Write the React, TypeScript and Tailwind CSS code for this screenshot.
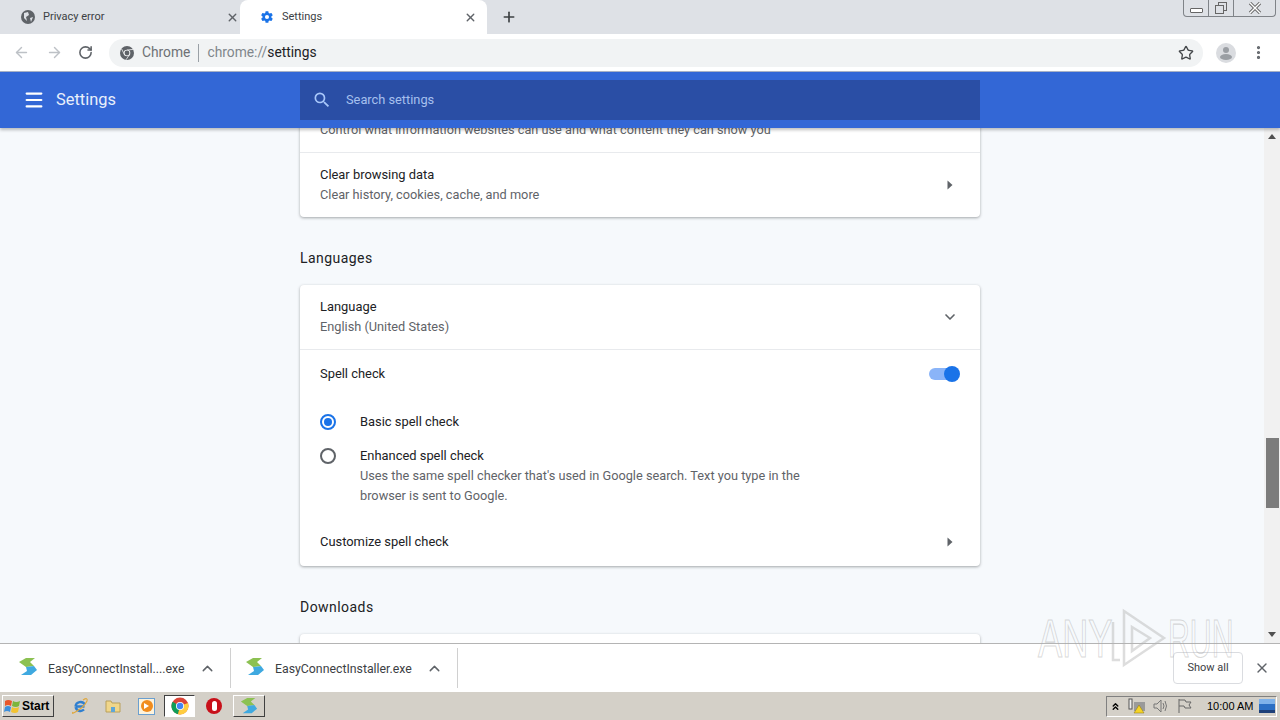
import { ArrowLeft, ArrowRight, ChevronDown, ChevronUp, ChevronsUp, Menu, MoreVertical, Plus, RotateCw, Star, X } from 'lucide-react';

function SetupIcon({ size = 20 }: { size?: number }) {
  return (
    <svg width={size} height={size} viewBox="0 0 20 20">
      <path d="M1 5 L8 1 L17 1 L12 5 L16 9 L8 10 Z" fill="#8cc152" />
      <path d="M8 10 L16 9 L19 13 L13 18 L3 18 L9 14 Z" fill="#3fa9e0" />
    </svg>
  );
}

function CaretRight() {
  return (
    <svg width="6" height="10" viewBox="0 0 6 10">
      <path d="M0.5 0.5 L5.5 5 L0.5 9.5 Z" fill="#5f6368" />
    </svg>
  );
}

function ChromeLogo() {
  return (
    <svg width="18" height="18" viewBox="0 0 18 18">
      <circle cx="9" cy="9" r="8.5" fill="#db4437" />
      <path d="M9 9 L1.6 4.7 A8.5 8.5 0 0 0 7 17.3 Z" fill="#0f9d58" />
      <path d="M9 9 L16.9 6 A8.5 8.5 0 0 1 7 17.3 Z" fill="#ffcd40" />
      <circle cx="9" cy="9" r="4" fill="#fff" />
      <circle cx="9" cy="9" r="3.2" fill="#4285f4" />
    </svg>
  );
}

function TopTabs() {
  return (
    <div className="flex h-[34px] items-stretch bg-[#dee1e6] text-[11px] text-[#3c4043]">
      <div className="flex w-[240px] items-center pl-[21px] pr-[1px]">
        <svg width="14" height="14" viewBox="0 0 14 14" className="mr-2">
          <circle cx="7" cy="7" r="7" fill="#5f6368" />
          <path d="M3 3 L7 2 L8 5 L5 7 L6 11 L3 8 Z M9 8 L12 7 L10 12 Z" fill="#dee1e6" />
        </svg>
        <span>Privacy error</span>
        <X size={13} strokeWidth={2.5} className="ml-auto text-[#5f6368]" />
      </div>
      <div className="flex w-[247px] items-center rounded-t-lg bg-white pl-[20px] pr-[10px]">
        <svg width="14" height="14" viewBox="0 0 24 24" className="mr-2">
          <path
            d="M19.4 13c.04-.33.06-.66.06-1s-.02-.67-.06-1l2.1-1.65a.5.5 0 0 0 .12-.64l-2-3.46a.5.5 0 0 0-.61-.22l-2.49 1a7.3 7.3 0 0 0-1.73-1l-.38-2.65A.5.5 0 0 0 13.92 2h-4a.5.5 0 0 0-.49.42l-.38 2.65a7.7 7.7 0 0 0-1.73 1l-2.49-1a.5.5 0 0 0-.61.22l-2 3.46a.5.5 0 0 0 .12.64L4.44 11a7.9 7.9 0 0 0 0 2l-2.1 1.65a.5.5 0 0 0-.12.64l2 3.46c.12.22.39.3.61.22l2.49-1c.52.4 1.08.73 1.73 1l.38 2.65c.04.24.25.42.49.42h4c.24 0 .45-.18.49-.42l.38-2.65a7.7 7.7 0 0 0 1.73-1l2.49 1c.22.08.49 0 .61-.22l2-3.46a.5.5 0 0 0-.12-.64L19.4 13zM12 15.5a3.5 3.5 0 1 1 0-7 3.5 3.5 0 0 1 0 7z"
            fill="#1a73e8"
          />
        </svg>
        <span>Settings</span>
        <X size={13} strokeWidth={2.5} className="ml-auto text-[#5f6368]" />
      </div>
      <div className="ml-[14px] flex items-center">
        <Plus size={16} strokeWidth={2.5} className="text-[#3c4043]" />
      </div>
      <div className="ml-auto mr-[4px] flex h-[17px] w-[93px] rounded-b-[4px] border border-t-0 border-[#7f8388]">
        <div className="flex w-[25px] items-end justify-center border-r border-[#7f8388] pb-[3px]">
          <div className="h-[5px] w-[13px] rounded-[1px] border border-[#666] bg-white" />
        </div>
        <div className="flex w-[25px] items-center justify-center border-r border-[#7f8388]">
          <div className="relative h-[12px] w-[12px]">
            <div className="absolute right-0 top-0 h-[9px] w-[9px] border border-[#666]" />
            <div className="absolute bottom-0 left-0 h-[9px] w-[9px] border border-[#666] bg-[#dee1e6]" />
          </div>
        </div>
        <div className="flex flex-1 items-center justify-center">
          <svg width="14" height="12" viewBox="0 0 14 12">
            <path d="M2 1 L12 11 M12 1 L2 11" stroke="#666" strokeWidth="3.2" />
            <path d="M2 1 L12 11 M12 1 L2 11" stroke="#fff" strokeWidth="1.4" />
          </svg>
        </div>
      </div>
    </div>
  );
}

function Toolbar() {
  return (
    <div className="flex h-[38px] items-center border-b border-[#aab4c8] bg-white pl-[13px] pr-[13px]">
      <ArrowLeft size={17} strokeWidth={2} className="text-[#bdc1c6]" />
      <ArrowRight size={17} strokeWidth={2} className="ml-[16px] text-[#bdc1c6]" />
      <RotateCw size={15} strokeWidth={2.5} className="ml-[15px] text-[#5f6368]" />
      <div className="ml-[16px] flex h-[28px] w-[1094px] items-center rounded-full bg-[#f1f3f4] pl-[11px] pr-[9px] text-[13.8px]">
        <svg width="14" height="14" viewBox="0 0 14 14" className="mr-[8px] shrink-0">
          <circle cx="7" cy="7" r="7" fill="#5f6368" />
          <path d="M7 4 L13 3.4 M4.4 8.5 L1.6 3 M9.6 8.5 L6 13.8" stroke="#f1f3f4" strokeWidth="0.8" />
          <circle cx="7" cy="7" r="3.3" fill="#f1f3f4" />
          <circle cx="7" cy="7" r="2.4" fill="#5f6368" />
        </svg>
        <span className="text-[#6e7175]">Chrome</span>
        <span className="ml-[8px] mr-[8px] h-[18px] w-px bg-[#9aa0a6]" />
        <span className="text-[#80868b]">chrome://</span>
        <span className="text-[#202124]">settings</span>
        <Star size={16} strokeWidth={2} className="ml-auto text-[#44474a]" />
      </div>
      <div className="ml-[13px] flex h-[20px] w-[20px] items-center justify-center overflow-hidden rounded-full bg-[#dadce0]">
        <svg width="20" height="20" viewBox="0 0 20 20">
          <circle cx="10" cy="7" r="3" fill="#9a9ea3" />
          <ellipse cx="10" cy="14" rx="6" ry="3" fill="#9a9ea3" />
        </svg>
      </div>
      <MoreVertical size={17} strokeWidth={2.5} className="ml-[14px] text-[#5f6368]" />
    </div>
  );
}

function SettingsHeader() {
  return (
    <div className="relative z-10 flex h-[56px] items-center bg-[#3367d6] shadow-[0_2px_3px_rgba(0,0,0,0.25)]">
      <div className="flex w-[300px] items-center pl-[23px]">
        <Menu size={22} strokeWidth={2.4} className="text-white" />
        <span className="ml-[11px] mt-[1px] text-[16.4px] text-[#e8effb]">Settings</span>
      </div>
      <div className="flex h-[40px] w-[680px] items-center bg-[#2a4ea5] pl-[12px]">
        <svg width="20" height="20" viewBox="0 0 24 24">
          <path
            d="M15.5 14h-.79l-.28-.27A6.47 6.47 0 0 0 16 9.5 6.5 6.5 0 1 0 9.5 16c1.61 0 3.09-.59 4.23-1.57l.27.28v.79l5 4.99L20.49 19l-4.99-5zm-6 0C7.01 14 5 11.99 5 9.5S7.01 5 9.5 5 14 7.01 14 9.5 11.99 14 9.5 14z"
            fill="#a8c7fa"
          />
        </svg>
        <span className="ml-[14px] text-[12.8px] text-[#a6c0ee]">Search settings</span>
      </div>
    </div>
  );
}

function SettingsBody() {
  return (
    <div className="flex min-h-0 flex-1 overflow-hidden bg-[#f6f9fc] text-[12.9px] text-[#202124]">
      <div className="min-w-0 flex-1 pl-[300px]">
        <div className="w-[680px]">
          <div className="-mt-[33px] rounded-b-[4px] bg-white shadow-[0_1px_3px_rgba(60,64,67,0.45)]">
            <div className="flex h-[57px] items-end pb-[13px] pl-[20px] text-[12.72px] text-[#5f6368]">
              Control what information websites can use and what content they can show you
            </div>
            <div className="flex h-[65px] items-center justify-between border-t border-[#e8eaed] pl-[20px] pr-[27px]">
              <div className="leading-[20px]">
                <div>Clear browsing data</div>
                <div className="text-[12.75px] text-[#5f6368]">Clear history, cookies, cache, and more</div>
              </div>
              <CaretRight />
            </div>
          </div>

          <h2 className="mt-[31px] text-[14px] font-normal leading-[20px] tracking-[0.45px]">Languages</h2>

          <div className="mt-[17px] rounded-[4px] bg-white shadow-[0_1px_3px_rgba(60,64,67,0.45)]">
            <div className="flex h-[64px] items-center justify-between pl-[20px] pr-[22px]">
              <div className="leading-[20px]">
                <div>Language</div>
                <div className="text-[12.75px] text-[#5f6368]">English (United States)</div>
              </div>
              <ChevronDown size={16} strokeWidth={2.5} className="text-[#5f6368]" />
            </div>
            <div className="flex h-[48px] items-center justify-between border-t border-[#e8eaed] pl-[20px] pr-[21px]">
              <span>Spell check</span>
              <div className="relative h-[12px] w-[30px] rounded-full bg-[#8ab4f8]">
                <div className="absolute -right-[1px] -top-[2px] h-[16px] w-[16px] rounded-full bg-[#1a73e8]" />
              </div>
            </div>
            <div className="mt-[15px] flex h-[20px] items-center pl-[20px]">
              <div className="flex h-[16px] w-[16px] items-center justify-center rounded-full border-2 border-[#1a73e8]">
                <div className="h-[8px] w-[8px] rounded-full bg-[#1a73e8]" />
              </div>
              <span className="ml-[24px]">Basic spell check</span>
            </div>
            <div className="mt-[14px] flex pl-[20px]">
              <div className="mt-[2px] h-[16px] w-[16px] rounded-full border-2 border-[#5f6368]" />
              <div className="ml-[24px] w-[460px] leading-[20px]">
                <div>Enhanced spell check</div>
                <div className="text-[12.75px] text-[#5f6368]">
                  Uses the same spell checker that's used in Google search. Text you type in the browser is sent to Google.
                </div>
              </div>
            </div>
            <div className="mt-[12px] flex h-[48px] items-center justify-between pl-[20px] pr-[27px]">
              <span>Customize spell check</span>
              <CaretRight />
            </div>
          </div>

          <h2 className="mt-[31px] text-[14px] font-normal leading-[20px] tracking-[0.45px]">Downloads</h2>

          <div className="mt-[17px] h-[40px] rounded-[4px] bg-white shadow-[0_1px_3px_rgba(60,64,67,0.45)]" />
        </div>
      </div>
      <div className="flex w-[16px] flex-col items-center bg-[#f1f1f1]">
        <div className="mt-[6px] h-0 w-0 border-x-[4px] border-b-[5px] border-x-transparent border-b-[#505050]" />
        <div className="mt-[299px] h-[70px] w-[13px] bg-[#7c7c7c]" />
        <div className="mt-auto mb-[6px] h-0 w-0 border-x-[4px] border-t-[5px] border-x-transparent border-t-[#505050]" />
      </div>
    </div>
  );
}

function DownloadItem({ name, width, pad }: { name: string; width: string; pad: string }) {
  return (
    <div className={`flex h-[40px] items-center border-r border-[#d0d0d0] ${pad} ${width}`}>
      <div className="-mt-[3px]">
        <SetupIcon />
      </div>
      <span className="ml-[10px] mt-[2px] text-[12.3px] text-[#3c4043]">{name}</span>
      <ChevronUp size={17} strokeWidth={2} className="ml-auto mr-[14px] text-[#5f6368]" />
    </div>
  );
}

function DownloadBar() {
  return (
    <div className="relative flex h-[49px] items-center border-t border-[#b4b4b4] bg-white">
      <DownloadItem name="EasyConnectInstall....exe" width="w-[231px]" pad="pl-[18px]" />
      <DownloadItem name="EasyConnectInstaller.exe" width="w-[227px]" pad="pl-[14px]" />
      <div className="ml-auto flex h-[32px] w-[70px] items-center justify-center rounded-[4px] border border-[#dadce0] text-[11px] text-[#3c4043]">
        Show all
      </div>
      <X size={16} strokeWidth={2} className="ml-[11px] mr-[10px] text-[#5f6368]" />
    </div>
  );
}

function Watermark() {
  const outline = "text-transparent [-webkit-text-stroke:1.2px_rgba(170,170,170,0.45)] [font-family:'Liberation_Sans',sans-serif]";
  return (
    <div className="pointer-events-none absolute left-[1038px] top-[608px] z-20 flex h-[60px] items-center text-[54px] leading-none">
      <div className="w-[72px] overflow-visible">
        <span className={`inline-block origin-left scale-x-[0.67] ${outline}`}>ANY</span>
      </div>
      <svg width="58" height="60" viewBox="0 0 58 60" fill="none" stroke="#b4b4b4" strokeOpacity="0.45" strokeWidth="2.5">
        <path d="M3 14 L3 52 L10 52 M14 3 L54 30 L14 57 Z M22 19 L40 30 L22 43 Z" />
      </svg>
      <div className="w-[64px] overflow-visible">
        <span className={`inline-block origin-left scale-x-[0.56] ${outline}`}>RUN</span>
      </div>
    </div>
  );
}

function Taskbar() {
  return (
    <div className="flex h-[28px] items-center bg-[#d4d0c8] text-[11px] text-black">
      <div className="ml-[2px] flex h-[22px] w-[52px] items-center border border-b-[#404040] border-l-white border-r-[#404040] border-t-white pl-[1px] text-[12px] font-bold [font-family:'Liberation_Sans',sans-serif]">
        <svg width="17" height="16" viewBox="0 0 17 16" className="shrink-0">
          <path d="M1 3 Q4 1 8 3 L7 8 Q4 6 1 8 Z" fill="#e8562a" />
          <path d="M9 3 Q12 5 16 3 L15 8 Q12 10 8 8 Z" fill="#7cb53c" />
          <path d="M1 9 Q4 7 7 9 L6 14 Q3 12 0 14 Z" fill="#3c8fdc" />
          <path d="M8 9 Q11 11 15 9 L14 14 Q11 16 7 14 Z" fill="#f2c230" />
        </svg>
        <span className="ml-[1px]">Start</span>
      </div>
      <svg width="18" height="18" viewBox="0 0 18 18" className="ml-[17px]" fill="none">
        <path d="M13.5 9.5 H4.5 M4.5 9.5 A5 5 0 0 1 13.8 7.5 M4.6 10 A5 5 0 0 0 13 12.5" stroke="#2f7fd0" strokeWidth="2.4" />
        <path d="M2 15 Q0 18 6 14 Q13 10 16 4 Q17 0 12 3" stroke="#e0a83c" strokeWidth="1.2" />
      </svg>
      <svg width="16" height="16" viewBox="0 0 16 16" className="ml-[16px]">
        <path d="M1 3 L6 3 L7 5 L15 5 L15 14 L1 14 Z" fill="#f0d68a" stroke="#b9a05a" />
        <rect x="6" y="9" width="4" height="5" fill="#5ea6d8" />
      </svg>
      <div className="ml-[17px] flex h-[17px] w-[17px] items-center justify-center border border-[#6a9fd0] bg-[#fdf3dd]">
        <div className="flex h-[12px] w-[12px] items-center justify-center rounded-full bg-[#f08c1e]">
          <div className="h-0 w-0 border-y-[3px] border-l-[5px] border-y-transparent border-l-white" />
        </div>
      </div>
      <div className="ml-[9px] flex h-[22px] w-[31px] items-center justify-center border border-b-white border-l-[#404040] border-r-white border-t-[#404040] bg-white">
        <ChromeLogo />
      </div>
      <div className="ml-[11px] flex h-[16px] w-[16px] items-center justify-center rounded-full bg-[#c8101a]">
        <div className="h-[10px] w-[5px] rounded-full bg-white" />
      </div>
      <div className="ml-[11px] flex h-[22px] w-[32px] items-center justify-center border border-b-[#404040] border-l-white border-r-[#404040] border-t-white">
        <SetupIcon size={18} />
      </div>
      <div className="ml-auto mr-[3px] flex h-[21px] w-[171px] items-center border border-b-white border-l-[#808080] border-r-white border-t-[#808080] pl-[3px]">
        <ChevronsUp size={11} strokeWidth={3} />
        <svg width="18" height="16" viewBox="0 0 18 16" className="ml-[7px] shrink-0">
          <rect x="1" y="1" width="3" height="10" fill="#eee" stroke="#555" />
          <rect x="6" y="4" width="11" height="9" fill="#9a9a9a" />
          <path d="M11 7 L16 15 L6 15 Z" fill="#f5d327" stroke="#8a7410" strokeWidth="0.5" />
        </svg>
        <svg width="16" height="16" viewBox="0 0 16 16" className="ml-[7px] shrink-0" fill="none" stroke="#777">
          <path d="M1 6 L4 6 L8 2 L8 14 L4 10 L1 10 Z" />
          <path d="M10 5 Q12 8 10 11 M12 3 Q15 8 12 13" />
        </svg>
        <svg width="16" height="16" viewBox="0 0 16 16" className="ml-[7px] shrink-0" fill="none" stroke="#666">
          <path d="M3 1 L3 15 M3 2 L9 2 L10 4 L15 4 L13 7 L15 10 L9 10 L8 8 L3 8" />
        </svg>
        <span className="ml-[15px] whitespace-nowrap [font-family:'Liberation_Sans',sans-serif]">10:00 AM</span>
        <svg width="16" height="14" viewBox="0 0 16 14" className="ml-auto mr-[1px] shrink-0">
          <rect x="0" y="0" width="16" height="14" fill="#2c6fc4" />
          <rect x="0" y="0" width="16" height="5" fill="#7fb2ea" />
          <rect x="0" y="11" width="16" height="3" fill="#1d3f78" />
        </svg>
      </div>
    </div>
  );
}

export default function App() {
  return (
    <div className="relative flex h-[720px] w-[1280px] flex-col overflow-hidden bg-white [font-family:Roboto,'Liberation_Sans',sans-serif]">
      <TopTabs />
      <Toolbar />
      <SettingsHeader />
      <SettingsBody />
      <DownloadBar />
      <Taskbar />
      <Watermark />
    </div>
  );
}
